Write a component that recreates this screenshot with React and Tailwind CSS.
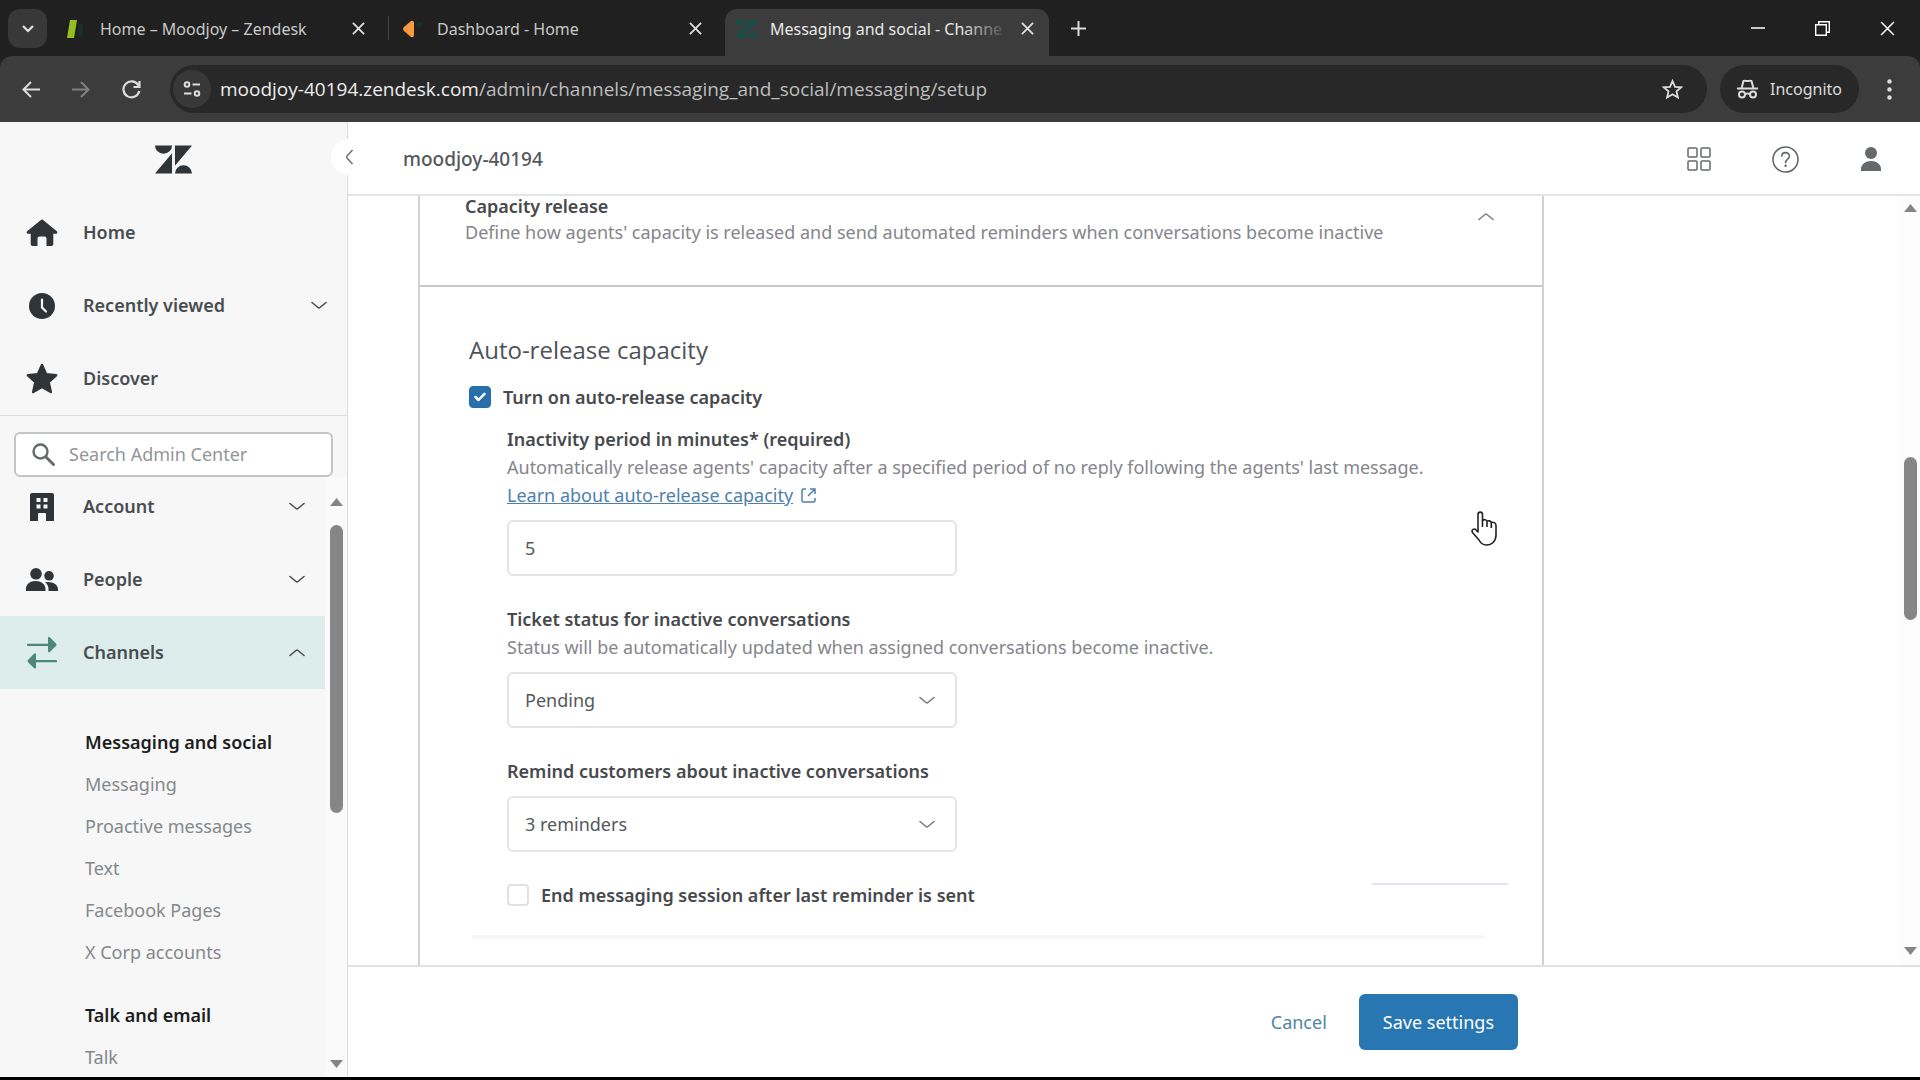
import React from "react";

const sans = "font-['Noto_Sans','Open_Sans',sans-serif]";

function Chevron({ up = false, className = "" }) {
  return (
    <svg width="16" height="9" viewBox="0 0 16 9" fill="none" stroke="currentColor" strokeWidth="1.600" strokeLinecap="round" strokeLinejoin="round" className={className} aria-hidden="true">
      <path d={up ? "M1 7.500 7 2.500q1-.8 2 0l6 5" : "M1 1.500 7 6.500q1 .8 2 0l6-5"} />
    </svg>
  );
}

function Cross({ size = 13, width = 2 }) {
  return (
    <svg width={size} height={size} viewBox="0 0 14 14" stroke="currentColor" strokeWidth={width} aria-hidden="true">
      <path d="M1 1 13 13M13 1 1 13" />
    </svg>
  );
}

function ZendeskMark({ className = "" }) {
  return (
    <svg viewBox="0 0 38 29" fill="currentColor" className={className} aria-hidden="true">
      <path d="M0 0h17.5a8.75 8.6 0 0 1-17.5 0ZM17.5 8v21H0ZM20.5 0H38L20.5 21ZM20.5 29a8.75 8.6 0 0 1 17.5 0Z" />
    </svg>
  );
}

const icons = {
  home: (
    <svg width="32" height="28" viewBox="0 0 32 28" fill="currentColor">
      <path d="M14.6 1.2a2 2 0 0 1 2.8 0L30.6 12c1.4 1.2.8 2.8-1 2.8h-2.3V25a2 2 0 0 1-2 2h-4.8v-7.5q0-2-2-2h-5q-2 0-2 2V27H6.7a2 2 0 0 1-2-2V14.800H2.400c-1.800 0-2.400-1.600-1-2.800Z" />
    </svg>
  ),
  clock: (
    <svg width="26" height="26" viewBox="0 0 26 26" fill="none">
      <circle cx="13" cy="13" r="13" fill="currentColor" />
      <path d="M13 6.500v8l4 4" stroke="#f7f7f8" strokeWidth="2.200" strokeLinecap="round" />
    </svg>
  ),
  star: (
    <svg width="32" height="31" viewBox="0 0 32 31" fill="currentColor" stroke="currentColor" strokeWidth="2.500" strokeLinejoin="round">
      <path d="m16 2 4.100 9.300 10 1-7.500 6.800L24.800 29 16 23.900 7.200 29l2.200-9.900L1.900 12.300l10-1Z" />
    </svg>
  ),
  building: (
    <svg width="24" height="28" viewBox="0 0 24 28" fill="currentColor" fillRule="evenodd">
      <path d="M2 0h20q2 0 2 2v26h-8v-7q0-1-1-1H9q-1 0-1 1v7H0V2q0-2 2-2Zm4.500 5v4h4V5Zm7 0v4h4V5Zm-7 6.500v4h4v-4Zm7 0v4h4v-4Z" />
    </svg>
  ),
  people: (
    <svg width="32" height="23" viewBox="0 0 32 23" fill="currentColor">
      <circle cx="10" cy="5.800" r="5.800" />
      <circle cx="23" cy="7.800" r="4.800" />
      <path d="M0 23v-2.500c0-4 4-7.500 9.500-7.500s10 3.500 10 7.500V23ZM19 14.300c6.500-1.500 13 1.700 13 7V23h-9.500v-2.200c0-2.600-1.300-4.800-3.500-6.500Z" />
    </svg>
  ),
  channels: (
    <svg width="30" height="34" viewBox="0 0 30 34" fill="currentColor">
      <path d="M1 7.700h20V2.200q0-2.200 1.800-1L29 7.500q1 1.200 0 2.400l-6.200 6q-1.800 1.200-1.800-1V9.900H1a1.100 1.100 0 0 1 0-2.200ZM29 24.100H9v-5.500q0-2.200-1.800-1L1 23.900q-1 1.200 0 2.400l6.200 6q1.800 1.200 1.800-1v-5h20a1.100 1.100 0 0 0 0-2.200Z" />
    </svg>
  ),
};

function NavRow({ icon, label, chevron, active = false }) {
  return (
    <button
      type="button"
      aria-expanded={chevron ? chevron === "up" : undefined}
      className={`flex h-[73px] w-full shrink-0 items-center pr-5 text-left text-[18px] font-semibold text-[#494d50] ${active ? "bg-[#dcedeb]" : ""}`}
    >
      <span className={`flex w-[83px] justify-center ${active ? "text-[#4d887b]" : "text-[#2f3438]"}`}>{icons[icon]}</span>
      <span className="flex-1">{label}</span>
      {chevron && <Chevron up={chevron === "up"} />}
    </button>
  );
}

function Tab({ favicon, title, active = false }) {
  return (
    <div className={`flex h-full items-center pb-2 ${active ? "w-[324px] rounded-t-xl bg-[#3c3c3c] pr-3 pl-[9px]" : "w-[336px] pr-[20px] pl-3"}`}>
      <span className="flex w-[24px] shrink-0 justify-center">{favicon}</span>
      <span className={`relative ml-3 flex-1 text-[16px] whitespace-nowrap ${active ? "text-[#e8e8e8]" : "text-[#c8c8c8]"}`}>
        {title}
        {active && <span className="absolute inset-y-0 right-0 w-12 bg-linear-to-r from-transparent to-[#3c3c3c]" />}
      </span>
      <button type="button" aria-label="Close tab" className="ml-2 flex w-[20px] justify-center text-[#dedede]">
        <Cross />
      </button>
    </div>
  );
}

function BrowserChrome() {
  return (
    <header className="shrink-0 bg-[#202020]">
      <div className="flex h-14 items-stretch pt-[9px]">
        <button type="button" aria-label="Search tabs" className="mr-[5px] ml-2 flex h-[39px] w-[39px] items-center justify-center rounded-xl bg-[#383838] text-[#e4e4e4]">
          <svg width="12" height="8" viewBox="0 0 12 8" fill="none" stroke="currentColor" strokeWidth="2.200"><path d="m1 1 5 5 5-5" /></svg>
        </button>
        <Tab
          title="Home – Moodjoy – Zendesk"
          favicon={<svg width="22" height="18" viewBox="0 0 22 18"><path d="M5 0h7L9 18H2Z" fill="#93c01f" /><path d="M14 4h4v11l-6 2Z" fill="#173029" /></svg>}
        />
        <div className="mt-[7px] h-6 w-px bg-[#454545]" />
        <Tab
          title="Dashboard - Home"
          favicon={<svg width="20" height="18" viewBox="0 0 20 18"><path d="M8 1q3-1 3 2v12q0 3-3 2L1 11q-2-2 0-4Z" fill="#f79a3e" /><path d="M14 3h5v4h-5Z" fill="#12332c" /></svg>}
        />
        <Tab active title="Messaging and social - Channe" favicon={<ZendeskMark className="h-[18px] w-[23px] text-[#174c48]" />} />
        <button type="button" aria-label="New tab" className="flex w-[58px] items-center justify-center pb-[9px] text-[#dadada]">
          <svg width="15" height="15" viewBox="0 0 15 15" stroke="currentColor" strokeWidth="2"><path d="M7.500 0v15M0 7.500h15" /></svg>
        </button>
        <div className="ml-auto flex pb-[9px] text-white">
          <button type="button" aria-label="Minimize" className="flex w-[65px] items-center justify-center">
            <svg width="14" height="2"><path d="M0 1h14" stroke="currentColor" strokeWidth="1.500" /></svg>
          </button>
          <button type="button" aria-label="Restore" className="flex w-[65px] items-center justify-center">
            <svg width="15" height="15" viewBox="0 0 15 15" fill="none" stroke="currentColor" strokeWidth="1.400"><path d="M.7 3.700h10.600v10.600H.7ZM3.700 3.700v-3h10.600v10.600h-3" /></svg>
          </button>
          <button type="button" aria-label="Close window" className="flex w-[65px] items-center justify-center">
            <Cross size={15} width={1.400} />
          </button>
        </div>
      </div>

      <div className="flex h-[66px] items-center rounded-t-xl bg-[#3c3c3c] text-[#dcdcdc]">
        <button type="button" aria-label="Back" className="ml-[6px] flex w-[50px] justify-center">
          <svg width="18" height="17" viewBox="0 0 18 17" fill="none" stroke="currentColor" strokeWidth="2"><path d="M18 8.500H2M9 1 1.500 8.500 9 16" /></svg>
        </button>
        <button type="button" aria-label="Forward" className="flex w-[50px] justify-center text-[#808080]">
          <svg width="18" height="17" viewBox="0 0 18 17" fill="none" stroke="currentColor" strokeWidth="2"><path d="M0 8.500h16M9 1l7.500 7.500L9 16" /></svg>
        </button>
        <button type="button" aria-label="Reload" className="flex w-[50px] justify-center">
          <svg width="19" height="19" viewBox="0 0 19 19" fill="none" stroke="currentColor" strokeWidth="2.200"><path d="M16.500 5.500A8 8 0 1 0 17.300 11M17.500 1v6h-6" /></svg>
        </button>
        <div className="ml-[14px] flex h-12 flex-1 items-center rounded-full bg-[#282828] pr-6 pl-[3px]">
          <button type="button" aria-label="Site information" className="flex h-[38px] w-[38px] shrink-0 items-center justify-center rounded-full bg-[#383838]">
            <svg width="18" height="18" viewBox="0 0 18 18" fill="none" stroke="currentColor" strokeWidth="2"><circle cx="4" cy="4.500" r="2.300" /><path d="M9.500 4.500H17M1 13.500h7.500" /><circle cx="14" cy="13.500" r="2.300" /></svg>
          </button>
          <span className="ml-[9px] flex-1 font-['Open_Sans',sans-serif] text-[19px] whitespace-nowrap text-[#bdbdbd]">
            <span className="text-[#ececec]">moodjoy-40194.zendesk.com</span>/admin/channels/messaging_and_social/messaging/setup
          </span>
          <button type="button" aria-label="Bookmark">
            <svg width="21" height="20" viewBox="0 0 21 20" fill="none" stroke="currentColor" strokeWidth="1.800"><path d="m10.500 2 2.500 5.800 6.200.5-4.700 4.100 1.400 6.100-5.400-3.200-5.400 3.200 1.400-6.100-4.700-4.100 6.200-.5Z" /></svg>
          </button>
        </div>
        <button type="button" className="ml-[13px] flex h-12 w-[139px] items-center justify-center gap-3 rounded-full bg-[#282828] text-[16px]">
          <svg width="21" height="20" viewBox="0 0 21 20" fill="none" stroke="currentColor" strokeWidth="2"><path d="M0 9.500h21M4.500 9.500 6.500 2q2-.7 3 0h2q1-.7 3 0l2 7.500" /><circle cx="5" cy="15.500" r="3" /><circle cx="16" cy="15.500" r="3" /><path d="M8 15.200q2.500-1.200 5 0" /></svg>
          Incognito
        </button>
        <button type="button" aria-label="Menu" className="flex w-[61px] justify-center">
          <svg width="5" height="21" viewBox="0 0 5 21" fill="currentColor"><circle cx="2.500" cy="2.500" r="2.200" /><circle cx="2.500" cy="10.500" r="2.200" /><circle cx="2.500" cy="18.500" r="2.200" /></svg>
        </button>
      </div>
    </header>
  );
}

function Arrow({ down = false }) {
  return (
    <svg width="13" height="8" viewBox="0 0 13 8" fill="#858585" aria-hidden="true">
      <path d={down ? "M0 0h13L6.500 8Z" : "M0 8h13L6.500 0Z"} />
    </svg>
  );
}

function SubLink({ children }) {
  return <a href="#" className="flex h-[42px] items-center text-[18px] text-[#84888b]">{children}</a>;
}

function Sidebar() {
  return (
    <aside className="relative flex w-[348px] shrink-0 flex-col border-r border-[#d9dbdc] bg-[#f7f7f8]">
      <div className="flex h-[74px] shrink-0 items-center justify-center">
        <ZendeskMark className="h-[29px] w-[37px] text-[#2f3438]" />
      </div>
      <button type="button" aria-label="Collapse sidebar" className="absolute top-[17px] -right-5 z-10 flex h-9 w-9 items-center justify-center rounded-full bg-white text-[#6d7073]">
        <svg width="9" height="16" viewBox="0 0 9 16" fill="none" stroke="currentColor" strokeWidth="1.500"><path d="M7.500 1 2 7q-.8 1 0 2l5.500 6" /></svg>
      </button>
      <nav className="border-b border-[#dcdedf]">
        <NavRow icon="home" label="Home" />
        <NavRow icon="clock" label="Recently viewed" chevron="down" />
        <NavRow icon="star" label="Discover" />
      </nav>
      <label className="relative z-10 mx-[14px] mt-4 flex h-[45px] shrink-0 items-center gap-[14px] rounded-md border-2 border-[#c2c5c7] bg-white pl-4 text-[#65696c]">
        <svg width="23" height="23" viewBox="0 0 23 23" fill="none" stroke="currentColor" className="shrink-0"><circle cx="8.500" cy="8.500" r="7" strokeWidth="2.400" /><path d="m14 14 7.500 7.500" strokeWidth="3" strokeLinecap="round" /></svg>
        <input type="search" aria-label="Search Admin Center" placeholder="Search Admin Center" className="w-full min-w-0 bg-transparent text-[18px] outline-none placeholder:text-[#929699]" />
      </label>
      <div className="flex min-h-0 flex-1 overflow-hidden">
        <nav className="-mt-[7px] flex-1">
          <NavRow icon="building" label="Account" chevron="down" />
          <NavRow icon="people" label="People" chevron="down" />
          <NavRow icon="channels" label="Channels" chevron="up" active />
          <div className="pt-8 pl-[85px]">
            <h2 className="flex h-[42px] items-center text-[18px] font-semibold text-[#1c1e20]">Messaging and social</h2>
            <SubLink>Messaging</SubLink>
            <SubLink>Proactive messages</SubLink>
            <SubLink>Text</SubLink>
            <SubLink>Facebook Pages</SubLink>
            <SubLink>X Corp accounts</SubLink>
            <h2 className="mt-[21px] flex h-[42px] items-center text-[18px] font-semibold text-[#1c1e20]">Talk and email</h2>
            <SubLink>Talk</SubLink>
          </div>
        </nav>
        <div className="flex w-[22px] flex-col items-center bg-[#fafafb] pt-[21px] pb-[9px]">
          <Arrow />
          <div className="mt-[19px] h-[288px] w-[13px] rounded-full bg-[#868686]" />
          <div className="mt-auto"><Arrow down /></div>
        </div>
      </div>
    </aside>
  );
}

function SelectBox({ id, options, describedBy }) {
  return (
    <div className="relative max-w-[450px]">
      <select id={id} aria-describedby={describedBy} className="h-14 w-full appearance-none rounded-md border-2 border-[#e3e4e6] bg-white px-4 text-[18px] text-[#55585b]">
        {options.map((o) => <option key={o}>{o}</option>)}
      </select>
      <Chevron className="pointer-events-none absolute top-6 right-[22px] text-[#777a7d]" />
    </div>
  );
}

const labelText = "block text-[18px] leading-7 font-semibold text-[#47494c]";
const hintText = "text-[18px] leading-7 text-[#85858c]";

function Settings() {
  return (
    <div className="flex min-h-0 flex-1 overflow-hidden">
      <div className="min-w-0 flex-1 pl-[70px]">
        <section className="h-full w-full max-w-[1126px] border-x-2 border-[#d0d1d2]">
          <div className="flex items-start justify-between border-b-2 border-[#c8c9ca] pr-12 pb-10 pl-[45px]">
            <div>
              <h2 className="text-[18px] leading-5 font-semibold text-[#47494c]">Capacity release</h2>
              <p className="mt-[3px] text-[18px] leading-[26px] text-[#85858c]">Define how agents' capacity is released and send automated reminders when conversations become inactive</p>
            </div>
            <button type="button" aria-label="Collapse section" className="mt-4 text-[#7d8083]"><Chevron up /></button>
          </div>
          <form className="pt-[47px] pr-[34px] pl-[49px]">
            <h3 className="font-['Open_Sans',sans-serif] text-[24px] leading-8 text-[#505256]">Auto-release capacity</h3>
            <label className="mt-[19px] flex h-6 items-center gap-3 text-[18px] font-semibold text-[#47494c]">
              <span className="relative flex">
                <input type="checkbox" defaultChecked className="peer h-[22px] w-[22px] appearance-none rounded-[4px] border border-[#c9cbcd] bg-white checked:border-[#1f6fad] checked:bg-[#2a6fa9]" />
                <svg viewBox="0 0 22 22" className="pointer-events-none absolute inset-0 hidden peer-checked:block" fill="none" stroke="white" strokeWidth="2.500" strokeLinecap="round" strokeLinejoin="round"><path d="m6.500 11 3 3 6-6.200" /></svg>
              </span>
              Turn on auto-release capacity
            </label>
            <div className="pl-[38px]">
              <label htmlFor="period" className={`mt-4 ${labelText}`}>Inactivity period in minutes* (required)</label>
              <p className={hintText}>
                Automatically release agents' capacity after a specified period of no reply following the agents' last message.
                <br />
                <a href="#" className="inline-flex items-center gap-2 text-[#4e80ad]">
                  <span className="underline">Learn about auto-release capacity</span>
                  <svg width="15" height="15" viewBox="0 0 15 15" fill="none" stroke="currentColor" strokeWidth="1.500"><path d="M5 1H2.500Q1 1 1 2.500v10Q1 14 2.500 14h10q1.500 0 1.500-1.500V10M9 1h5v5M14 1 7 8" /></svg>
                </a>
              </p>
              <input id="period" type="text" defaultValue="5" className="mt-[11px] h-14 w-full max-w-[450px] rounded-md border-2 border-[#e3e4e6] bg-white px-4 text-[18px] text-[#55585b]" />
              <label htmlFor="status" className={`mt-[29px] ${labelText}`}>Ticket status for inactive conversations</label>
              <p id="status-hint" className={`mb-[11px] ${hintText}`}>Status will be automatically updated when assigned conversations become inactive.</p>
              <SelectBox id="status" describedBy="status-hint" options={["Pending", "Solved"]} />
              <label htmlFor="reminders" className={`mt-[29px] mb-[11px] ${labelText}`}>Remind customers about inactive conversations</label>
              <SelectBox id="reminders" options={["3 reminders", "2 reminders", "1 reminder", "No reminders"]} />
              <div className="mt-[31px] flex items-start justify-between">
                <label className="flex h-6 items-center gap-3 text-[18px] font-semibold text-[#47494c]">
                  <input type="checkbox" className="h-[22px] w-[22px] appearance-none rounded-[4px] border-2 border-[#e0e2e4] bg-white checked:bg-[#2a6fa9]" />
                  End messaging session after last reminder is sent
                </label>
                <div className="h-[2px] w-[136px] bg-[#dfe5ea]" />
              </div>
            </div>
            <hr className="mt-7 mr-6 ml-[3px] border-t-4 border-[#f7f7f8]" />
          </form>
        </section>
      </div>
      <div className="flex w-5 shrink-0 flex-col items-center bg-[#fcfcfc] pt-[8px] pb-[10px]">
        <Arrow />
        <div className="mt-[245px] h-[163px] w-[13px] rounded-full bg-[#868686]" />
        <div className="mt-auto"><Arrow down /></div>
      </div>
    </div>
  );
}

function Content() {
  return (
    <main className="flex min-w-0 flex-1 flex-col bg-white">
      <div className="flex h-[74px] shrink-0 items-center border-b-2 border-[#e2e4e5] pt-0.5 pl-[55px] text-[#65696c]">
        <h1 className="flex-1 text-[19px] font-medium text-[#54585b]">moodjoy-40194</h1>
        <button type="button" aria-label="Products" className="flex w-[86px] justify-center">
          <svg width="24" height="24" viewBox="0 0 24 24" fill="none" stroke="currentColor" strokeWidth="1.500"><rect x="1" y="1" width="9" height="9" rx="1" /><rect x="14" y="1" width="9" height="9" rx="1" /><rect x="1" y="14" width="9" height="9" rx="1" /><rect x="14" y="14" width="9" height="9" rx="1" /></svg>
        </button>
        <button type="button" aria-label="Help" className="flex w-[86px] justify-center">
          <svg width="27" height="27" viewBox="0 0 27 27" fill="none" stroke="currentColor" strokeWidth="1.600"><circle cx="13.500" cy="13.500" r="12.500" /><path d="M9.800 10.200c.2-5 7.800-4.600 7.600.2-.2 2.800-3.800 2.900-3.800 6.300" strokeLinecap="round" /><circle cx="13.600" cy="19.800" r="1.200" fill="currentColor" stroke="none" /></svg>
        </button>
        <button type="button" aria-label="Profile" className="mr-[6px] flex w-[86px] justify-center">
          <svg width="20" height="24" viewBox="0 0 20 24" fill="currentColor"><circle cx="10" cy="6" r="6" /><path d="M0 24v-2c0-4.500 4.500-8 10-8s10 3.500 10 8v2Z" /></svg>
        </button>
      </div>
      <Settings />
      <footer className="flex h-[112px] shrink-0 border-t-2 border-[#e0e1e2] pl-[70px]">
        <div className="flex w-full max-w-[1126px] items-center justify-end pr-[26px]">
          <button type="button" className="mr-4 px-4 text-[18px] text-[#4f86a5]">Cancel</button>
          <button type="button" className="h-14 rounded-md bg-[#2876b2] px-6 text-[18px] text-white">Save settings</button>
        </div>
      </footer>
    </main>
  );
}

export default function App() {
  return (
    <div className={`relative flex h-screen flex-col overflow-hidden border-b-[3px] border-black ${sans}`}>
      <BrowserChrome />
      <div className="flex min-h-0 flex-1">
        <Sidebar />
        <Content />
      </div>
      <svg width="26" height="35" viewBox="0 0 26 35" className="pointer-events-none absolute top-[511px] left-[1471px] z-20" fill="white" stroke="#222" strokeWidth="1.600" strokeLinejoin="round" aria-hidden="true">
        <path d="M7 21V3.500C7 .3 11.500.3 11.500 3.500V9.500C13 8 15.500 8.500 16 10.300c1.500-1 3.700-.5 4.200 1.200 2-.8 4.800.2 4.800 3v9.500c0 6-4 10-9.500 10-4 0-6-2-7.500-5L1.500 21.500C0 18.500 3.500 17 5 19Z" />
        <path d="M11.500 9v7M16 10.500V16M20.300 12v5" fill="none" />
      </svg>
    </div>
  );
}
